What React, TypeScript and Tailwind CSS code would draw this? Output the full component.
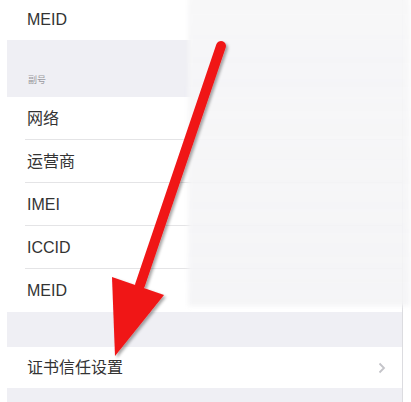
import React from 'react'

const font = { fontFamily: '"Liberation Sans", "Noto Sans CJK SC", sans-serif' }

type RowProps = { label: string; last?: boolean; chevron?: boolean; h?: string }

function Row({ label, last, chevron, h = 'h-[43px]' }: RowProps) {
  return (
    <div className={`relative flex items-center bg-white pl-[20px] pr-[16px] ${h}`}>
      <span className="text-[16px] text-[#333] leading-none">{label}</span>
      {chevron && (
        <svg className="ml-auto" width="8" height="12" viewBox="0 0 8 12">
          <polyline points="1.5,1.5 6,6 1.5,10.5" fill="none" stroke="#c4c4c9" strokeWidth="1.8" />
        </svg>
      )}
      {!last && <div className="absolute bottom-0 left-[18px] right-0 h-px bg-[#e4e4e6]" />}
    </div>
  )
}

export default function App() {
  return (
    <div className="relative w-[411px] h-[402px] overflow-hidden bg-white" style={font}>
      <div className="flex h-full">
        <div className="w-[7px] bg-white" />
        <div className="flex flex-col w-[396px] border-r border-[#dcdce0]">
          <Row label="MEID" last h="h-[40px]" />

          <div className="h-[57px] bg-[#efeff4] flex items-end pl-[21px] pb-[12px]">
            <span className="text-[9px] text-[#9a9aa0] leading-none">副号</span>
          </div>

          <Row label="网络" />
          <Row label="运营商" />
          <Row label="IMEI" />
          <Row label="ICCID" />
          <Row label="MEID" last />

          <div className="h-[35px] bg-[#efeff4]" />
          <Row label="证书信任设置" last chevron h="h-[41px]" />
          <div className="flex-1 bg-[#efeff4]" />
        </div>
        <div className="flex-1 bg-white" />
      </div>

      {/* blurred panel covering the value column */}
      <div className="absolute left-[188px] top-[-4px] w-[222px] h-[310px] bg-gradient-to-b from-[#f7f7f8]/95 to-[#f4f4f6]/90 blur-[2px]" />

      <svg className="absolute inset-0" width="411" height="402" viewBox="0 0 411 402">
        <defs>
          <filter id="sh" x="-20%" y="-20%" width="140%" height="140%">
            <feDropShadow dx="2" dy="2" stdDeviation="1.5" floodColor="#000" floodOpacity="0.35" />
          </filter>
        </defs>
        <g filter="url(#sh)">
          <line x1="221" y1="46" x2="140" y2="285" stroke="#f01418" strokeWidth="10" strokeLinecap="round" />
          <polygon points="112,277 164,295 115,356" fill="#f01418" />
        </g>
      </svg>
    </div>
  )
}
